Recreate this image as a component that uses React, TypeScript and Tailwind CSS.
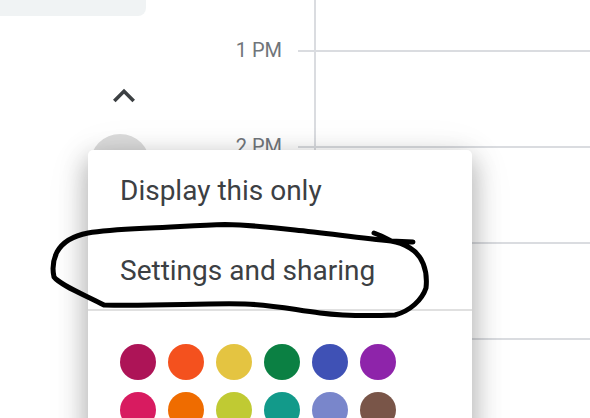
const colors = [
  ["#ad1457", "#f4511e", "#e4c441", "#0b8043", "#3f51b5", "#8e24aa"],
  ["#d81b60", "#ef6c00", "#c0ca33", "#129a8a", "#7986cb", "#795548"],
];
const hours = [
  { label: "1 PM", h: "h-[52px]" },
  { label: "2 PM", h: "h-[96px]" },
];

export default function App() {
  return (
    <div className="relative flex h-[418px] w-[590px] overflow-hidden bg-white font-['Roboto',sans-serif]">
      <div className="flex w-[226px] flex-col">
        <div className="h-4 w-[146px] rounded-br-lg bg-[#f0f3f4]" />
        <svg className="ml-[102px] mt-[58px] h-11 w-11" viewBox="0 0 24 24" fill="#3c4043">
          <path d="M12 8l-6 6 1.41 1.41L12 10.83l4.59 4.58L18 14z" />
        </svg>
        <div className="ml-[90px] mt-4 h-[60px] w-[60px] rounded-full bg-[#dcdcdc]" />
      </div>
      <div className="flex w-[72px] flex-col items-end pr-4">
        {hours.map((x) => (
          <div key={x.label} className={`${x.h} flex items-end`}>
            <span className="relative top-[10px] text-[20px] leading-6 text-[#70757a]">{x.label}</span>
          </div>
        ))}
      </div>
      <div className="relative flex-1">
        <div className="h-[52px] border-b-2 border-[#dadce0]" />
        <div className="h-[96px] border-b-2 border-[#dadce0]" />
        <div className="h-[96px] border-b-2 border-[#dadce0]" />
        <div className="h-[96px] border-b-2 border-[#dadce0]" />
        <div className="absolute bottom-0 left-4 top-0 w-0.5 bg-[#dadce0]" />
      </div>

      <div className="absolute left-[88px] top-[150px] h-[300px] w-[384px] rounded-[5px] bg-white shadow-[0_10px_26px_2px_rgba(0,0,0,0.28),0_8px_48px_0_rgba(0,0,0,0.08)]">
        <div className="flex h-20 items-center px-8 pt-0.5 text-[28px] text-[#3c4043]">Display this only</div>
        <div className="flex h-[81px] items-center border-b-2 border-[#e0e0e0] px-8 pt-0.5 text-[28px] text-[#3c4043]">
          Settings and sharing
        </div>
        <div className="flex flex-col gap-3 px-8 pt-[33px]">
          {colors.map((row, i) => (
            <div key={i} className="flex gap-3">
              {row.map((c) => (
                <div key={c} className="h-9 w-9 rounded-full" style={{ backgroundColor: c }} />
              ))}
            </div>
          ))}
        </div>
      </div>

      <svg className="absolute left-0 top-0 h-[418px] w-[590px]" viewBox="0 0 590 418" fill="none" stroke="#000" strokeWidth="5" strokeLinecap="round" strokeLinejoin="round">
        <path d="M374 233 C380 235 386 238 391 241 C360 238 325 233 295 230 C270 227 245 225 225 224.500 C200 225 175 227 150 228 C130 229 105 230 88 233 C72 236 62 243 57 252 C53 260 52 268 54 277 C60 285 85 295 104 305 C160 306 205 303 245 304 C275 305 295 310 320 313 C345 316 370 316 395 315 C410 311 422 300 426 288 C428 270 422 255 410 248 C405 245 398 242 391 241 L413 242" />
      </svg>
    </div>
  );
}
